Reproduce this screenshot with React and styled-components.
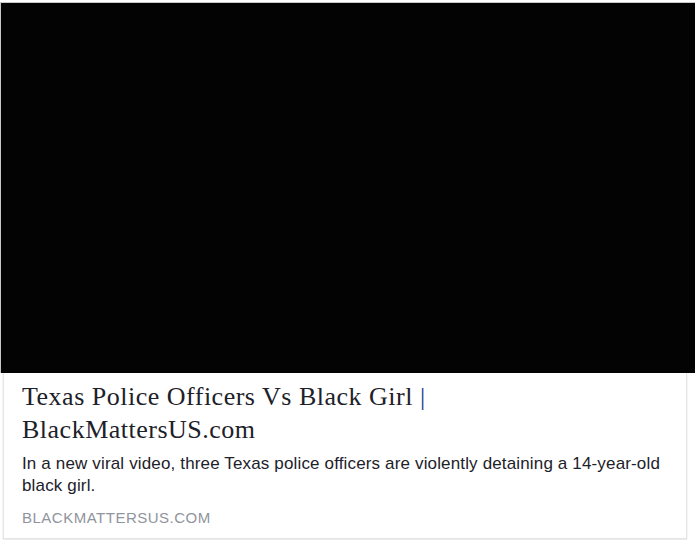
import styled, { createGlobalStyle } from "styled-components";

const Global = createGlobalStyle`
  body {
    margin: 0;
    background: #fff;
  }
`;

const Page = styled.div`
  padding-top: 2px;
  width: 700px;
  height: 540px;
  box-sizing: border-box;
`;

const Media = styled.div`
  width: 695px;
  height: 371px;
  background: #030303;
  border-top: 1px solid #c8c8c8;
  border-left: 1px solid #c8c8c8;
  box-sizing: border-box;
`;

const Body = styled.div`
  margin: 0 13px 0 3px;
  padding: 7px 18px 11px 18px;
  border: 1px solid #e4e5e7;
  border-top: none;
  box-shadow: 0 1px 2px rgba(0, 0, 0, 0.12);
`;

const Title = styled.h1`
  margin: 0;
  font-family: "Liberation Serif", Georgia, serif;
  font-weight: normal;
  font-size: 26px;
  line-height: 33px;
  letter-spacing: 0.5px;
  color: #1d2129;
`;

const Pipe = styled.span`
  color: #1c3b8f;
`;

const Desc = styled.p`
  margin: 7px 0 0;
  font-family: "Liberation Sans", Helvetica, Arial, sans-serif;
  font-size: 17px;
  line-height: 22px;
  letter-spacing: 0.15px;
  color: #1d2129;
`;

const Domain = styled.div`
  margin-top: 12px;
  font-family: "Liberation Sans", Helvetica, Arial, sans-serif;
  font-size: 15px;
  line-height: 18px;
  letter-spacing: 0.5px;
  color: #90949c;
  text-transform: uppercase;
`;

export default function App() {
  return (
    <Page>
      <Global />
      <Media />
      <Body>
        <Title>
          Texas Police Officers Vs Black Girl <Pipe>|</Pipe>
          <br />
          BlackMattersUS.com
        </Title>
        <Desc>
          In a new viral video, three Texas police officers are violently
          detaining a 14-year-old black girl.
        </Desc>
        <Domain>blackmattersus.com</Domain>
      </Body>
    </Page>
  );
}
